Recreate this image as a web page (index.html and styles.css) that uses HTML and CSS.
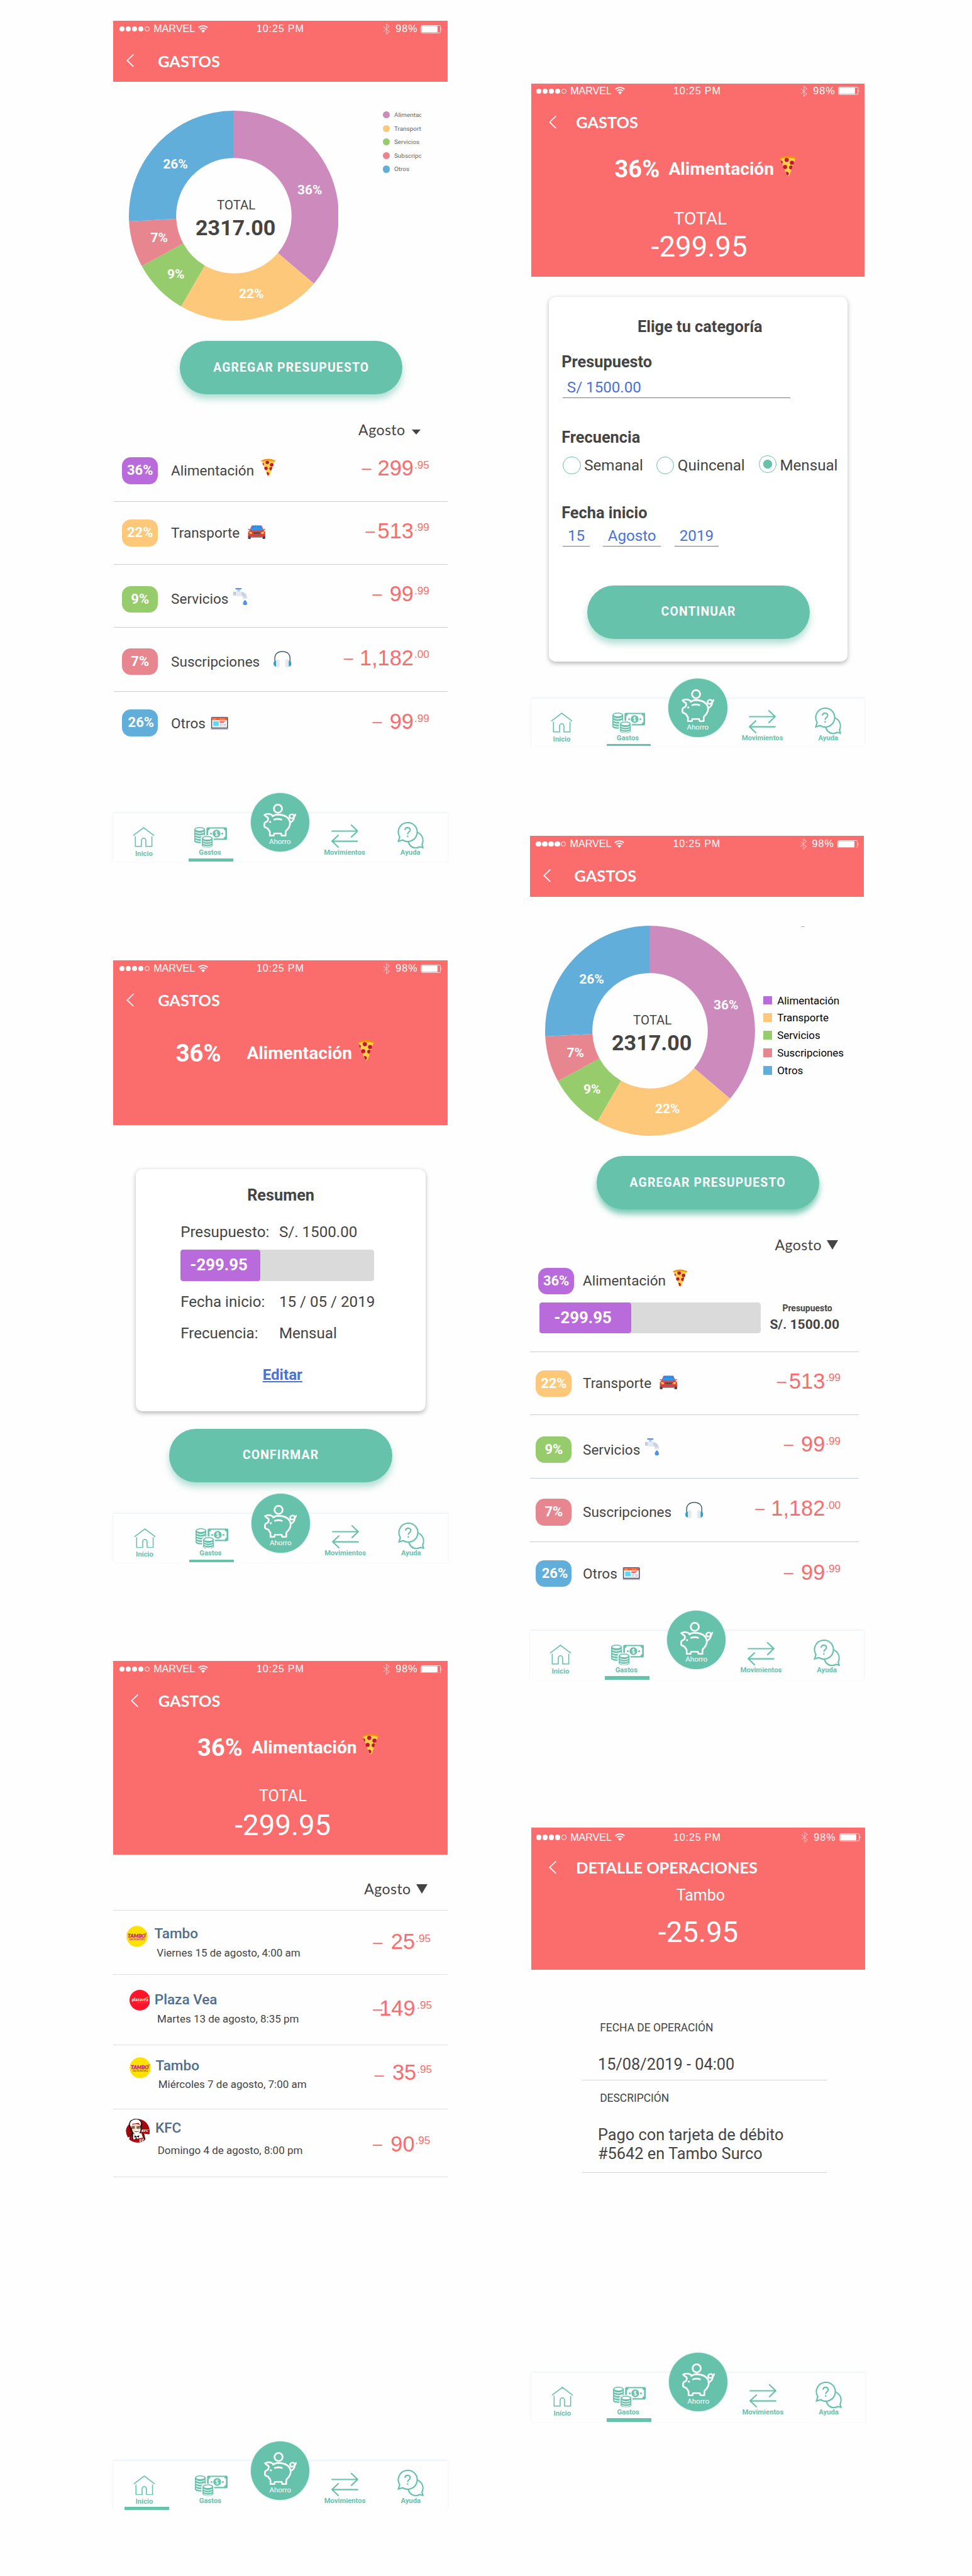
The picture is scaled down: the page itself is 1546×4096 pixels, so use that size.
FILE: index.html
```html
<!DOCTYPE html>
<html lang="es">
<head>
<meta charset="utf-8">
<title>Gastos</title>
<link rel="stylesheet" href="styles.css">
</head>
<body>

<svg class="sprite" aria-hidden="true">
  <symbol id="wifi" viewBox="0 0 30 23">
    <path d="M1.5 7.5a19.5 19.5 0 0 1 27 0M6 12.6a12.8 12.8 0 0 1 18 0" fill="none" stroke="#fff" stroke-width="3.2"/>
    <path d="M9.6 16.6a7.8 7.8 0 0 1 10.8 0L15 22.5z" fill="#fff"/>
  </symbol>
  <symbol id="bluetooth" viewBox="0 0 21 34">
    <path d="M1.5 9.5 19 24.5 10.5 32V2L19 9.5 1.5 24.5" fill="none" stroke="#fff" stroke-width="2.2"/>
  </symbol>
  <symbol id="battery" viewBox="0 0 64 24">
    <rect x="1" y="1" width="58" height="22" rx="3.5" fill="none" stroke="#fff" stroke-width="1.6"/>
    <rect x="2.6" y="2.8" width="47.5" height="18.4" rx="2" fill="#fff"/>
    <path d="M61 8q3 4 0 8z" fill="#fff"/>
  </symbol>
  <symbol id="chevron" viewBox="0 0 22 38">
    <path d="M20.5 1.5 2.5 19l18 17.500" fill="none" stroke="#fff" stroke-width="3.2" stroke-linecap="round"/>
  </symbol>

  <symbol id="pizza" viewBox="0 0 44 53">
    <path d="M3 7Q22 2 41 7L26 50q-3.500 4-7 0z" fill="#ffce4b"/>
    <g fill="#be1931">
      <circle cx="19" cy="11.500" r="5.200"/><circle cx="32" cy="18.500" r="5.200"/>
      <circle cx="15" cy="29" r="5"/><path d="M31 35a5 5 0 1 1 2.800-8z"/>
      <path d="M16.500 41.500a4.600 4.600 0 1 1 5 8.500q-2 0-2.500-1z"/><path d="M4.500 12.500q5 1 4.500 5.500-.5 2.500-2.500 2.500z"/>
    </g>
    <path d="M0 6.500Q21-4.500 44 6.500L42.500 9.500Q22 2.500 1.500 9.500z" fill="#f4900c"/>
  </symbol>

  <symbol id="car" viewBox="0 0 53 41">
    <path d="M12 1h29l6 13 5 7v13H1V21l5-7z" fill="#e8443f"/>
    <path d="M12.500 3q14-3 28 0l5 11q-19 4-38 0z" fill="#3396e8"/>
    <path d="M17 2l-2 6M23 1.500l-1 6M30 1.500l1 6M36 2l2 6" stroke="#1a6dbf" stroke-width="1.500"/>
    <path d="M0 11h6v3H2zM53 11h-6v3h4z" fill="#e8443f"/>
    <path d="M4 19l8 2 1 5-7-1zM49 19l-8 2-1 5 7-1z" fill="#ffd34d"/>
    <path d="M15 21h23l-3 5H18z" fill="#5a4a4c"/>
    <path d="M2 28h49v5H2z" fill="#d8403e"/>
    <path d="M1 33h8v7q-4 2-8 0zM44 33h8v7q-4 2-8 0z" fill="#4b4448"/>
    <path d="M9 33h35v4H9z" fill="#7b7478"/>
  </symbol>

  <symbol id="faucet" viewBox="0 0 42 52">
    <path d="M0 11h24v11H0z" fill="#c3cbdc"/>
    <path d="M22 11q17 0 19 17v3H29v-2q0-7-7-7z" fill="#ccd3e2"/>
    <path d="M8 9h16v15H8z" fill="#e4e9f3"/><path d="M12 4h7v6h-7z" fill="#b7c0d4"/>
    <rect x="6" y="0" width="19" height="4" rx="2" fill="#5294ea"/>
    <path d="M28 27h14v4H28z" fill="#dfe5f0"/>
    <path d="M35 35q6 6 6 10a6 6 0 0 1-12 0q0-4 6-10z" fill="#4c93ec"/>
  </symbol>

  <symbol id="headphones" viewBox="0 0 53 50">
    <path d="M4 30V22C4 8 14 1.500 26.500 1.500S49 8 49 22V30" fill="none" stroke="#34495e" stroke-width="2.400"/>
    <path d="M8 29H5q-5 2-5 8.500T5 46h3zM45 29h3q5 2 5 8.500T48 46h-3z" fill="#2ea2cc"/>
    <rect x="8" y="25" width="10" height="24" rx="4.500" fill="#e4e8ea"/>
    <rect x="35" y="25" width="10" height="24" rx="4.500" fill="#e4e8ea"/>
  </symbol>

  <symbol id="laptop" viewBox="0 0 53 38">
    <rect x="1.500" y="0" width="50" height="35" rx="3" fill="#5c546a"/>
    <path d="M4.500 3h44v28h-44z" fill="#fff"/><path d="M4.500 3h44v6h-44z" fill="#ff4f19"/>
    <path d="M8 5h7v1.800H8zM28 5h3v1.800h-3zM33 5h3v1.800h-3zM38 5h3v1.800h-3z" fill="#ffd08a"/>
    <path d="M8 13h16v14H8z" fill="#54dcff"/>
    <path d="M26.500 12h17v1.800h-17zM26.500 15.500h13v1.800h-13z" fill="#e0262e"/>
    <path d="M27 20h8v1.500h-8zM37 20h9v1.500h-9zM27 23h8v1.500h-8zM37 23h9v1.500h-9zM27 26h8v1.500h-8zM37 26h9v1.500h-9z" fill="#b9b5c6"/>
    <path d="M0 34.500h53q0 3.500-3 3.500H3q-3 0-3-3.500z" fill="#b9b3c4"/>
  </symbol>

  <symbol id="home" viewBox="0 0 65 59">
    <path d="M1.500 25.500 32.500 2l31 23.500M8 27v30.500h18V40a6.500 7 0 0 1 13 0v17.500h18V27" fill="none" stroke="#67c2ac" stroke-width="3"/>
  </symbol>

  <symbol id="cash" viewBox="0 0 97 61">
    <rect x="36" y="1" width="61" height="37" rx="3.500" fill="#67c2ac"/>
    <path d="M46 4.500h41q.5 5 5 5.500v18.500q-4.500.5-5 5.500H46q-.5-5-5-5.500V10q4.500-.5 5-5.500z" fill="#fff"/>
    <circle cx="66" cy="19.500" r="11.500" fill="#67c2ac"/>
    <path d="M69.500 15.800q-1-2.300-3.500-2.300-3.500 0-3.500 2.700 0 2.300 3.500 3.300 3.800 1 3.800 3.300 0 2.700-3.800 2.700-3 0-3.800-2.600M66 11v17" fill="none" stroke="#fff" stroke-width="2"/>
    <circle cx="49.500" cy="19.500" r="2.800" fill="#67c2ac"/><circle cx="83" cy="19.500" r="2.800" fill="#67c2ac"/>
    <path d="M0 7v35q3 6 16 6t16-6V7Q29 0 16 0T0 7z" fill="#67c2ac"/>
    <ellipse cx="16" cy="7" rx="12.500" ry="4" fill="#fff"/>
    <path d="M3 15q5 3.500 13 3.500T29 15M3 23q5 3.500 13 3.500T29 23M3 31q5 3.500 13 3.500T29 31M3 39q5 3.500 13 3.500T29 39" fill="none" stroke="#fff" stroke-width="2.600"/>
    <path d="M19.500 31q3-7 19-7t19 7V61h-38z" fill="#fff"/>
    <path d="M22.500 33v22q3 6 16 6t16-6V33q-3-6.500-16-6.500T22.500 33z" fill="#67c2ac"/>
    <ellipse cx="38.500" cy="33.500" rx="12.500" ry="4" fill="#fff"/>
    <path d="M25.500 41q5 3.500 13 3.500t13-3.500M25.500 48q5 3.500 13 3.500t13-3.500M25.500 55q5 3.500 13 3.500t13-3.500" fill="none" stroke="#fff" stroke-width="2.600"/>
  </symbol>

  <symbol id="pig" viewBox="0 0 97 97">
    <g fill="none" stroke="#fff" stroke-width="5" stroke-linejoin="round" stroke-linecap="round">
      <circle cx="43" cy="14.500" r="12"/>
      <path d="M27 34.500Q16 26.500 3 33q3 4 9 7 3 2.500 1.500 7l-2 5-6.500 3.500Q2.500 57 2.500 60v5q0 4 4 5.500l6 2.500 6.500 10v11.500h11.500L32 88h20l2 6.500h11.500l.5-13Q79 70 79 57 76 34 44 32q-10 0-17 5"/>
      <path d="M32 47q11-4 21 0"/>
      <path d="M78 56q12-4 13-17 0-7-6-8-7 .5-8 6 .5 6 6 6.500 9-1 12-12" stroke-width="4.600"/>
    </g>
    <circle cx="20" cy="54" r="3" fill="#fff"/>
  </symbol>

  <symbol id="transfer" viewBox="0 0 80 69">
    <path d="M2 19.500h75M59.500 2 78 19.500 59.500 37M78 49.500H3M20.500 32 2 49.500 20.500 67" fill="none" stroke="#67c2ac" stroke-width="4" stroke-linecap="round"/>
  </symbol>

  <symbol id="help" viewBox="0 0 78 79">
    <g fill="none" stroke="#67c2ac" stroke-width="4">
      <path d="M7 44.500A28 28 0 1 1 16 53.500L3 57z"/>
      <path d="M59 30q17 8 17 25 0 6-3 12l3 9-10-2.500Q60 77 54 77 36 76 32 57"/>
      <path d="M22.500 24q.5-7.500 8-7.500 7.500.5 7.500 7 0 4-4 6.500-3.500 2.500-3.500 6.500"/>
      <path d="M30.500 40v4.500"/>
    </g>
  </symbol>
</svg>

<main class="board">
  <div class="column">

    <!-- Gastos: lista por categoría -->
    <section class="phone phone-gastos">
      <header class="header">
        <div class="status">
          <div class="carrier"><i></i><i></i><i></i><i></i><i class="off"></i><span>MARVEL</span><svg class="wifi"><use href="#wifi"/></svg></div>
          <span class="time">10:25 PM</span>
          <div class="power"><svg class="bluetooth"><use href="#bluetooth"/></svg><span>98%</span><svg class="battery"><use href="#battery"/></svg></div>
        </div>
        <div class="titlebar"><svg class="chevron"><use href="#chevron"/></svg><h1>GASTOS</h1></div>
      </header>
      <div class="chart">
        <svg class="donut" viewBox="-311 -311 622 622">
          <path d="M0-311A311 311 0 0 1 237.200 201.100L130.400 110.600A171 171 0 0 0 0-171z" fill="#cc8abd"/>
          <path d="M237.200 201.100A311 311 0 0 1-156.400 268.800L-86 147.800A171 171 0 0 0 130.400 110.600z" fill="#fdc87a"/>
          <path d="M-156.400 268.800A311 311 0 0 1-272.800 149.300L-150 82.100A171 171 0 0 0-86 147.800z" fill="#96cc6b"/>
          <path d="M-272.800 149.300A311 311 0 0 1-310.500 16.800L-170.700 9.300A171 171 0 0 0-150 82.100z" fill="#e8868f"/>
          <path d="M-310.500 16.800A311 311 0 0 1 0-311V-171A171 171 0 0 0-170.700 9.300z" fill="#62aedb"/>
          <g class="slice-label">
            <text x="225" y="-64">36%</text><text x="52" y="244">22%</text><text x="-172" y="186">9%</text>
            <text x="-221" y="79">7%</text><text x="-173" y="-139">26%</text>
          </g>
          <text x="7" y="-19" class="donut-label">TOTAL</text>
          <text x="5" y="58" class="donut-total">2317.00</text>
        </svg>
        <ul class="legend dots">
          <li><i class="c-pink"></i><span>Alimentación</span></li>
          <li><i class="c-orange"></i><span>Transporte</span></li>
          <li><i class="c-green"></i><span>Servicios</span></li>
          <li><i class="c-red"></i><span>Subscripciones</span></li>
          <li><i class="c-blue"></i><span>Otros</span></li>
        </ul>
      </div>
      <button class="button add">AGREGAR PRESUPUESTO</button>
      <div class="month">Agosto<i class="caret small"></i></div>
      <ul class="expenses">
        <li class="r-food"><b class="badge c-purple">36%</b><span class="name">Alimentación</span><svg class="pizza"><use href="#pizza"/></svg><span class="amount"><span class="minus">–</span><span class="whole">299</span><span class="cents">.95</span></span></li>
        <li class="r-car"><b class="badge c-orange">22%</b><span class="name">Transporte</span><svg class="car"><use href="#car"/></svg><span class="amount"><span class="minus">–</span><span class="whole">513</span><span class="cents">.99</span></span></li>
        <li class="r-services"><b class="badge c-green">9%</b><span class="name">Servicios</span><svg class="faucet"><use href="#faucet"/></svg><span class="amount"><span class="minus">–</span><span class="whole">99</span><span class="cents">.99</span></span></li>
        <li class="r-subs"><b class="badge c-red">7%</b><span class="name">Suscripciones</span><svg class="headphones"><use href="#headphones"/></svg><span class="amount"><span class="minus">–</span><span class="whole">1,182</span><span class="cents">.00</span></span></li>
        <li class="r-other"><b class="badge c-blue">26%</b><span class="name">Otros</span><svg class="laptop"><use href="#laptop"/></svg><span class="amount"><span class="minus">–</span><span class="whole">99</span><span class="cents">.99</span></span></li>
      </ul>
      <nav class="tabs">
        <a class="tab t-home"><svg><use href="#home"/></svg><span>Inicio</span></a>
        <a class="tab t-cash active"><svg><use href="#cash"/></svg><span>Gastos</span></a>
        <a class="fab"><svg><use href="#pig"/></svg><span>Ahorro</span></a>
        <a class="tab t-move"><svg><use href="#transfer"/></svg><span>Movimientos</span></a>
        <a class="tab t-help"><svg><use href="#help"/></svg><span>Ayuda</span></a>
      </nav>
    </section>

    <!-- Resumen del presupuesto -->
    <section class="phone phone-resumen">
      <header class="header">
        <div class="status">
          <div class="carrier"><i></i><i></i><i></i><i></i><i class="off"></i><span>MARVEL</span><svg class="wifi"><use href="#wifi"/></svg></div>
          <span class="time">10:25 PM</span>
          <div class="power"><svg class="bluetooth"><use href="#bluetooth"/></svg><span>98%</span><svg class="battery"><use href="#battery"/></svg></div>
        </div>
        <div class="titlebar"><svg class="chevron"><use href="#chevron"/></svg><h1>GASTOS</h1></div>
        <div class="category"><b class="share">36%</b><b class="cat">Alimentación</b><svg><use href="#pizza"/></svg></div>
      </header>
      <div class="card summary">
        <h2>Resumen</h2>
        <p class="pair"><span>Presupuesto:</span><span>S/. 1500.00</span></p>
        <div class="meter"><b>-299.95</b></div>
        <p class="pair"><span>Fecha inicio:</span><span>15 / 05 / 2019</span></p>
        <p class="pair"><span>Frecuencia:</span><span>Mensual</span></p>
        <a class="edit">Editar</a>
      </div>
      <button class="button">CONFIRMAR</button>
      <nav class="tabs">
        <a class="tab t-home"><svg><use href="#home"/></svg><span>Inicio</span></a>
        <a class="tab t-cash active"><svg><use href="#cash"/></svg><span>Gastos</span></a>
        <a class="fab"><svg><use href="#pig"/></svg><span>Ahorro</span></a>
        <a class="tab t-move"><svg><use href="#transfer"/></svg><span>Movimientos</span></a>
        <a class="tab t-help"><svg><use href="#help"/></svg><span>Ayuda</span></a>
      </nav>
    </section>

    <!-- Movimientos de la categoría -->
    <section class="phone phone-movimientos">
      <header class="header">
        <div class="status">
          <div class="carrier"><i></i><i></i><i></i><i></i><i class="off"></i><span>MARVEL</span><svg class="wifi"><use href="#wifi"/></svg></div>
          <span class="time">10:25 PM</span>
          <div class="power"><svg class="bluetooth"><use href="#bluetooth"/></svg><span>98%</span><svg class="battery"><use href="#battery"/></svg></div>
        </div>
        <div class="titlebar"><svg class="chevron"><use href="#chevron"/></svg><h1>GASTOS</h1></div>
        <div class="category"><b class="share">36%</b><b class="cat">Alimentación</b><svg><use href="#pizza"/></svg></div>
        <p class="total-label">TOTAL</p>
        <p class="total">-299.95</p>
      </header>
      <div class="month">Agosto<i class="caret"></i></div>
      <ul class="moves">
        <li class="m1">
          <svg class="logo" viewBox="0 0 64 64"><circle cx="32" cy="32" r="31.500" fill="#ffe100"/><text x="31" y="36.500" class="tambo-name" textLength="54" lengthAdjust="spacingAndGlyphs">TAMBO</text><text x="32" y="44" class="tambo-claim" textLength="46" lengthAdjust="spacingAndGlyphs">CADA VEZ MÁS CERCA</text><circle cx="59" cy="23.500" r="2" fill="none" stroke="#be1c91"/></svg>
          <div class="where"><b>Tambo</b><span>Viernes 15 de agosto, 4:00 am</span></div><span class="amount"><span class="minus">–</span><span class="whole">25</span><span class="cents">.95</span></span>
        </li>
        <li class="m2">
          <svg class="logo" viewBox="0 0 62 62"><circle cx="31" cy="31" r="31" fill="#ff142b"/><text x="7" y="35" class="pv-name" textLength="49" lengthAdjust="spacingAndGlyphs">plaza<tspan fill="#ffe23b">v</tspan>ea</text><path d="M43 31q5-9 14-9" fill="none" stroke="#ffe23b" stroke-width="1.800"/><path d="M24 38.500h32" stroke="#ff8a95" stroke-width="1" stroke-dasharray="2 1"/></svg>
          <div class="where"><b>Plaza Vea</b><span>Martes 13 de agosto, 8:35 pm</span></div><span class="amount"><span class="minus">–</span><span class="whole">149</span><span class="cents">.95</span></span>
        </li>
        <li class="m3">
          <svg class="logo" viewBox="0 0 64 64"><circle cx="32" cy="32" r="31.500" fill="#ffe100"/><text x="31" y="36.500" class="tambo-name" textLength="54" lengthAdjust="spacingAndGlyphs">TAMBO</text><text x="32" y="44" class="tambo-claim" textLength="46" lengthAdjust="spacingAndGlyphs">CADA VEZ MÁS CERCA</text><circle cx="59" cy="23.500" r="2" fill="none" stroke="#be1c91"/></svg>
          <div class="where"><b>Tambo</b><span>Miércoles 7 de agosto, 7:00 am</span></div><span class="amount"><span class="minus">–</span><span class="whole">35</span><span class="cents">.95</span></span>
        </li>
        <li class="m4">
          <svg class="logo" viewBox="0 0 71 71">
            <path d="M12 15Q20 1 36 .5 58 2 67 20q6 14 3 26l-16-2 4 18Q48 70 36 70.500 22 71 10 61l2-8-6 2Q0 44 .5 34 2 22 12 15z" fill="#a3080c"/>
            <path d="M13 57l9-13 24-2 7 22Q44 70 34 70 20 68 13 57z" fill="#b30d12"/>
            <path d="M20 57l2-13 24-2 5 14-30 5z" fill="#fff"/>
            <path d="M41 60h3v9h-3zM47 59h3v8h-3zM52 58h2v6h-2z" fill="#fff"/>
            <path d="M12 54l8-13 1 22M53 44l4 18M18 40l-3-8-5-15 4-10L26 .8 40 3l6 10-1 22-2 8" fill="none" stroke="#111" stroke-width="2.600"/>
            <path d="M12 17Q16 3 28 2q14-1 17 11l-1 8-6-9-18 3-2 14z" fill="#fff"/>
            <path d="M17 20q9-8 25-2l2 14q-1 11-11 16-12-4-14-16z" fill="#fbdcbf"/>
            <path d="M23 34q9-5 17 0l-2 7-6 9-6-8z" fill="#fff"/>
            <path d="M17 23h10M32 23h12M18 26h8v2h-8zM33 26h8v2h-8zM26 37q6 3 12 0M15 28l4 11 7 7" fill="none" stroke="#111" stroke-width="1.600"/>
            <path d="M26 49l6 3 8-3-1 7-6-3-7 3zM31 53l-3 8h5z" fill="#111"/>
            <text x="46" y="38.500" class="kfc-name" textLength="22" lengthAdjust="spacingAndGlyphs">KFC</text>
          </svg>
          <div class="where"><b>KFC</b><span>Domingo 4 de agosto, 8:00 pm</span></div><span class="amount"><span class="minus">–</span><span class="whole">90</span><span class="cents">.95</span></span>
        </li>
      </ul>
      <nav class="tabs">
        <a class="tab t-home active"><svg><use href="#home"/></svg><span>Inicio</span></a>
        <a class="tab t-cash"><svg><use href="#cash"/></svg><span>Gastos</span></a>
        <a class="fab"><svg><use href="#pig"/></svg><span>Ahorro</span></a>
        <a class="tab t-move"><svg><use href="#transfer"/></svg><span>Movimientos</span></a>
        <a class="tab t-help"><svg><use href="#help"/></svg><span>Ayuda</span></a>
      </nav>
    </section>
  </div>

  <div class="column">

    <!-- Formulario de presupuesto -->
    <section class="phone phone-form">
      <header class="header">
        <div class="status">
          <div class="carrier"><i></i><i></i><i></i><i></i><i class="off"></i><span>MARVEL</span><svg class="wifi"><use href="#wifi"/></svg></div>
          <span class="time">10:25 PM</span>
          <div class="power"><svg class="bluetooth"><use href="#bluetooth"/></svg><span>98%</span><svg class="battery"><use href="#battery"/></svg></div>
        </div>
        <div class="titlebar"><svg class="chevron"><use href="#chevron"/></svg><h1>GASTOS</h1></div>
        <div class="category"><b class="share">36%</b><b class="cat">Alimentación</b><svg><use href="#pizza"/></svg></div>
        <p class="total-label">TOTAL</p>
        <p class="total">-299.95</p>
      </header>
      <div class="card form">
        <h2>Elige tu categoría</h2>
        <h3 class="h-budget">Presupuesto</h3>
        <div class="field">S/ 1500.00</div>
        <h3 class="h-freq">Frecuencia</h3>
        <div class="radios">
          <label><i></i><span>Semanal</span></label>
          <label><i></i><span>Quincenal</span></label>
          <label class="checked"><i></i><span>Mensual</span></label>
        </div>
        <h3 class="h-date">Fecha inicio</h3>
        <div class="date"><span class="day">15</span><span class="mon">Agosto</span><span class="year">2019</span></div>
        <button class="button">CONTINUAR</button>
      </div>
      <nav class="tabs">
        <a class="tab t-home"><svg><use href="#home"/></svg><span>Inicio</span></a>
        <a class="tab t-cash active"><svg><use href="#cash"/></svg><span>Gastos</span></a>
        <a class="fab"><svg><use href="#pig"/></svg><span>Ahorro</span></a>
        <a class="tab t-move"><svg><use href="#transfer"/></svg><span>Movimientos</span></a>
        <a class="tab t-help"><svg><use href="#help"/></svg><span>Ayuda</span></a>
      </nav>
    </section>

    <!-- Gastos con presupuesto activo -->
    <section class="phone phone-presupuesto">
      <header class="header">
        <div class="status">
          <div class="carrier"><i></i><i></i><i></i><i></i><i class="off"></i><span>MARVEL</span><svg class="wifi"><use href="#wifi"/></svg></div>
          <span class="time">10:25 PM</span>
          <div class="power"><svg class="bluetooth"><use href="#bluetooth"/></svg><span>98%</span><svg class="battery"><use href="#battery"/></svg></div>
        </div>
        <div class="titlebar"><svg class="chevron"><use href="#chevron"/></svg><h1>GASTOS</h1></div>
      </header>
      <div class="chart">
        <svg class="donut" viewBox="-311 -311 622 622">
          <path d="M0-311A311 311 0 0 1 237.200 201.100L130.400 110.600A171 171 0 0 0 0-171z" fill="#cc8abd"/>
          <path d="M237.200 201.100A311 311 0 0 1-156.400 268.800L-86 147.800A171 171 0 0 0 130.400 110.600z" fill="#fdc87a"/>
          <path d="M-156.400 268.800A311 311 0 0 1-272.800 149.300L-150 82.100A171 171 0 0 0-86 147.800z" fill="#96cc6b"/>
          <path d="M-272.800 149.300A311 311 0 0 1-310.500 16.800L-170.700 9.300A171 171 0 0 0-150 82.100z" fill="#e8868f"/>
          <path d="M-310.500 16.800A311 311 0 0 1 0-311V-171A171 171 0 0 0-170.700 9.300z" fill="#62aedb"/>
          <g class="slice-label">
            <text x="225" y="-64">36%</text><text x="52" y="244">22%</text><text x="-172" y="186">9%</text>
            <text x="-221" y="79">7%</text><text x="-173" y="-139">26%</text>
          </g>
          <text x="7" y="-19" class="donut-label">TOTAL</text>
          <text x="5" y="58" class="donut-total">2317.00</text>
        </svg>
        <ul class="legend squares">
          <li><i class="c-purple"></i><span>Alimentación</span></li>
          <li><i class="c-orange"></i><span>Transporte</span></li>
          <li><i class="c-green"></i><span>Servicios</span></li>
          <li><i class="c-red"></i><span>Suscripciones</span></li>
          <li><i class="c-blue"></i><span>Otros</span></li>
        </ul>
      </div>
      <button class="button add">AGREGAR PRESUPUESTO</button>
      <div class="month">Agosto<i class="caret"></i></div>
      <div class="budget">
        <div class="budget-head"><b class="badge c-purple">36%</b><span class="name">Alimentación</span><svg class="pizza"><use href="#pizza"/></svg></div>
        <div class="budget-body">
          <div class="meter"><b>-299.95</b></div>
          <div class="limit"><small>Presupuesto</small><b>S/. 1500.00</b></div>
        </div>
      </div>
      <ul class="expenses">
        <li class="r-car"><b class="badge c-orange">22%</b><span class="name">Transporte</span><svg class="car"><use href="#car"/></svg><span class="amount"><span class="minus">–</span><span class="whole">513</span><span class="cents">.99</span></span></li>
        <li class="r-services"><b class="badge c-green">9%</b><span class="name">Servicios</span><svg class="faucet"><use href="#faucet"/></svg><span class="amount"><span class="minus">–</span><span class="whole">99</span><span class="cents">.99</span></span></li>
        <li class="r-subs"><b class="badge c-red">7%</b><span class="name">Suscripciones</span><svg class="headphones"><use href="#headphones"/></svg><span class="amount"><span class="minus">–</span><span class="whole">1,182</span><span class="cents">.00</span></span></li>
        <li class="r-other"><b class="badge c-blue">26%</b><span class="name">Otros</span><svg class="laptop"><use href="#laptop"/></svg><span class="amount"><span class="minus">–</span><span class="whole">99</span><span class="cents">.99</span></span></li>
      </ul>
      <nav class="tabs">
        <a class="tab t-home"><svg><use href="#home"/></svg><span>Inicio</span></a>
        <a class="tab t-cash active"><svg><use href="#cash"/></svg><span>Gastos</span></a>
        <a class="fab"><svg><use href="#pig"/></svg><span>Ahorro</span></a>
        <a class="tab t-move"><svg><use href="#transfer"/></svg><span>Movimientos</span></a>
        <a class="tab t-help"><svg><use href="#help"/></svg><span>Ayuda</span></a>
      </nav>
    </section>

    <!-- Detalle de una operación -->
    <section class="phone phone-detalle">
      <header class="header">
        <div class="status">
          <div class="carrier"><i></i><i></i><i></i><i></i><i class="off"></i><span>MARVEL</span><svg class="wifi"><use href="#wifi"/></svg></div>
          <span class="time">10:25 PM</span>
          <div class="power"><svg class="bluetooth"><use href="#bluetooth"/></svg><span>98%</span><svg class="battery"><use href="#battery"/></svg></div>
        </div>
        <div class="titlebar"><svg class="chevron"><use href="#chevron"/></svg><h1>DETALLE OPERACIONES</h1></div>
        <p class="total-label">Tambo</p>
        <p class="total">-25.95</p>
      </header>
      <dl class="detail">
        <dt>FECHA DE OPERACIÓN</dt>
        <dd class="when">15/08/2019 - 04:00</dd>
        <dt class="second">DESCRIPCIÓN</dt>
        <dd class="what">Pago con tarjeta de débito<br>#5642 en Tambo Surco</dd>
      </dl>
      <nav class="tabs">
        <a class="tab t-home"><svg><use href="#home"/></svg><span>Inicio</span></a>
        <a class="tab t-cash active"><svg><use href="#cash"/></svg><span>Gastos</span></a>
        <a class="fab"><svg><use href="#pig"/></svg><span>Ahorro</span></a>
        <a class="tab t-move"><svg><use href="#transfer"/></svg><span>Movimientos</span></a>
        <a class="tab t-help"><svg><use href="#help"/></svg><span>Ayuda</span></a>
      </nav>
    </section>
  </div>
</main>
</body>
</html>
```
FILE: styles.css
```css
/* 1rem is 1/28.8 of the board width, so every length scales with the board */
html { font-size: 53.6806px; }
* { box-sizing: border-box; margin: 0; padding: 0; }
body { width: 28.8rem; height: 76.3rem; background: #fefefe; color: #444; font-family: Roboto, sans-serif; overflow-x: hidden; }
ul { list-style: none; }
svg { display: block; flex: none; }
button { border: 0; font-family: inherit; display: block; }
.sprite { position: absolute; width: 0; height: 0; }

.board { display: flex; padding-left: 3.36rem; gap: 2.48rem; }
.column { width: 9.9rem; flex: none; }
.phone { display: flex; flex-direction: column; width: 9.9rem; white-space: nowrap; }
.phone-gastos { margin-top: .62rem; height: 24.9rem; }
.phone-resumen { margin-top: 2.92rem; height: 17.83rem; }
.phone-movimientos { margin-top: 2.93rem; height: 25.15rem; }
.phone-form { margin-top: 2.48rem; height: 19.62rem; width: 9.88rem; }
.phone-presupuesto { margin-top: 2.66rem; margin-left: -.04rem; height: 25rem; }
.phone-detalle { margin-top: 4.38rem; height: 17.6rem; }

.c-purple { background: #ba6bdb; }
.c-pink { background: #cc8abd; }
.c-orange { background: #fdc87a; }
.c-green { background: #96cc6b; }
.c-red { background: #e8868f; }
.c-blue { background: #62aedb; }

/* header */
.header { background: #fb6c6c; color: #fff; height: 1.8rem; flex: none; }
.phone-resumen .header { height: 4.88rem; }
.phone-movimientos .header { height: 5.74rem; }
.phone-form .header { height: 5.71rem; }
.phone-detalle .header { height: 4.21rem; }

.status { display: flex; align-items: center; height: .48rem; font: .3rem/.4rem "Liberation Sans", sans-serif; padding: 0 .15rem 0 .18rem; }
.carrier { display: flex; align-items: center; width: 4.06rem; }
.carrier i { width: .155rem; height: .155rem; border-radius: 50%; background: #fff; margin-right: .03rem; }
.carrier .off { background: none; border: 1px solid #fff; }
.carrier span { margin-left: .085rem; }
.wifi { width: .3rem; height: .23rem; margin-left: .09rem; }
.time { letter-spacing: .016rem; }
.power { display: flex; align-items: center; margin-left: auto; }
.power span { margin: 0 .09rem 0 .16rem; letter-spacing: .02rem; }
.bluetooth { width: .21rem; height: .34rem; opacity: .5; }
.battery { width: .64rem; height: .24rem; }
.phone-form .status, .phone-detalle .status { padding-left: .15rem; padding-right: .14rem; }
.phone-form .status { height: .43rem; }
.phone-resumen .status { height: .5rem; }
.phone-detalle .status { height: .57rem; }

.titlebar { display: flex; align-items: center; height: .6rem; margin-top: .4rem; padding-left: .39rem; }
.chevron { width: .22rem; height: .38rem; }
.titlebar h1 { font: bold .472rem/.6rem Lato, sans-serif; margin-left: .71rem; }
.phone-form .titlebar, .phone-movimientos .titlebar, .phone-detalle .titlebar { padding-left: .52rem; }
.phone-form h1, .phone-movimientos h1, .phone-detalle h1 { margin-left: .59rem; }
.phone-form .titlebar { margin-top: .41rem; }
.phone-resumen .titlebar { margin-top: .38rem; }
.phone-detalle .titlebar { margin-top: .31rem; }

.category { display: flex; align-items: center; height: .8rem; line-height: .8rem; padding-left: 2.47rem; margin-top: .7rem; }
.category svg { width: .53rem; height: .63rem; margin: 0 0 .22rem .14rem; }
.share { font-size: .71rem; width: 1.6rem; }
.cat { font-size: .525rem; }
.phone-movimientos .category { margin-top: .69rem; padding-left: 2.49rem; }
.phone-resumen .category { margin-top: .9rem; padding-left: 1.85rem; }
.phone-resumen .share { width: 2.1rem; }
.total-label { font-size: .525rem; line-height: .6rem; text-align: center; margin-top: .76rem; padding-left: .14rem; }
.total { font-size: .85rem; line-height: 1rem; text-align: center; margin-top: .04rem; padding-left: .08rem; }
.phone-movimientos .total-label { font-size: .47rem; margin-top: .73rem; }
.phone-movimientos .total { margin-top: .07rem; padding-left: .14rem; }
.phone-detalle .total-label { font-size: .465rem; margin-top: .23rem; }
.phone-detalle .total { margin-top: .29rem; padding: 0; }

/* chart */
.chart { display: flex; height: 7.68rem; flex: none; padding-left: .45rem; }
.donut { width: 6.22rem; height: 6.22rem; margin-top: .86rem; }
.slice-label { font: bold 39px Roboto, sans-serif; fill: #fff; text-anchor: middle; }
.donut-label { font: 38px Roboto, sans-serif; fill: #444; text-anchor: middle; }
.donut-total { font: bold 63.5px Roboto, sans-serif; fill: #444; text-anchor: middle; }
.legend li { display: flex; align-items: center; }
.legend i { flex: none; }
.dots { margin: .78rem 0 0 1.31rem; }
.dots li { height: .402rem; font-size: .185rem; color: #666; }
.dots i { width: .21rem; height: .21rem; border-radius: 50%; margin-right: .13rem; }
.dots span { width: .81rem; overflow: hidden; }
.squares { margin: 2.81rem 0 0 .24rem; position: relative; }
.squares li { height: .52rem; font-size: .315rem; color: #000; }
.squares i { width: .26rem; height: .26rem; margin-right: .16rem; }
.squares::before { content: ""; position: absolute; left: 1.13rem; top: -1.93rem; width: .1rem; height: .02rem; background: #cc8abd; border-radius: 50% 50% 0 0; }

.button { width: 6.6rem; height: 1.58rem; flex: none; border-radius: .79rem; background: #67c2ac; color: #fff; font-weight: bold; font-size: .36rem; letter-spacing: .022rem; padding-bottom: .04rem; margin-left: 1.66rem; box-shadow: 0 .14rem .2rem rgba(103, 194, 172, .5); }
.add { margin-left: 1.97rem; padding-bottom: 0; }
.phone-presupuesto .button { box-shadow: 0 .14rem .18rem rgba(103, 194, 172, .85); }

.month { display: flex; align-items: center; flex: none; height: .6rem; margin-top: .75rem; padding-left: 7.26rem; font: .43rem/.6rem Lato, sans-serif; letter-spacing: .008rem; }
.caret { border: .17rem solid transparent; border-top: .29rem solid #444; border-bottom: 0; margin-left: .15rem; }
.caret.small { border-width: .16rem .135rem 0; margin-left: .2rem; margin-top: .12rem; }
.phone-movimientos .month { height: .94rem; margin-top: .72rem; padding: 0 0 .34rem 7.43rem; border-bottom: .02rem solid #dedede; }

/* expense rows */
.expenses li { display: flex; align-items: center; border-bottom: .018rem solid #c9cdd4; margin-left: .02rem; }
.expenses li > * { flex: none; }
.badge { width: 1.06rem; height: .79rem; line-height: .79rem; border-radius: .26rem; margin-left: .24rem; color: #fff; font-size: .41rem; text-align: center; }
.name { font-size: .42rem; line-height: .5rem; margin-left: .39rem; padding-top: .03rem; }
.pizza { width: .44rem; height: .53rem; margin: 0 0 .2rem .2rem; }
.car { width: .53rem; height: .41rem; margin: 0 0 .07rem .23rem; }
.faucet { width: .42rem; height: .52rem; margin: 0 0 .17rem .15rem; }
.headphones { width: .53rem; height: .5rem; margin: 0 0 .13rem .41rem; }
.laptop { width: .53rem; height: .38rem; margin: .03rem 0 0 .16rem; }
.amount { display: flex; align-items: center; margin: 0 .54rem .13rem auto; height: .7rem; color: #fb6c6c; font-family: "Liberation Sans", sans-serif; }
.minus { font-size: .5rem; margin-right: .19rem; }
.whole { font-size: .64rem; }
.cents { font-size: .32rem; margin: 0 0 .2rem .02rem; }
.expenses .r-food { height: 1.83rem; padding-top: .01rem; }
.expenses .r-car { height: 1.87rem; padding-top: .01rem; }
.expenses .r-services { height: 1.87rem; padding-top: .2rem; }
.expenses .r-subs { height: 1.885rem; padding-top: .14rem; }
.expenses .r-other { height: 1.86rem; border: 0; }
.r-car .minus { margin-right: .08rem; }
.r-services .amount { margin-bottom: .31rem; }
.r-services .minus, .r-other .minus { margin-right: .23rem; }
.r-subs .amount { margin-bottom: .22rem; }
.r-other .amount { margin-bottom: .06rem; }
.r-other .name { padding-top: .08rem; }
.r-other .badge { padding-left: .06rem; }

.phone-presupuesto .expenses .badge { margin-left: .18rem; }
.phone-presupuesto .expenses .name { margin-left: .33rem; }
.phone-presupuesto .expenses li { width: 9.75rem; margin-left: 0; }
.budget { width: 9.75rem; height: 2.88rem; padding-top: .385rem; border-bottom: .018rem solid #c9cdd4; }
.budget-head { display: flex; align-items: center; height: .79rem; }
.budget-head .badge { margin-left: .25rem; }
.budget-head .name { margin-left: .26rem; padding: 0; }
.budget-body { display: flex; margin: .23rem 0 0 .28rem; }
.meter { width: 6.56rem; height: .92rem; border-radius: .08rem; background: #dadada; flex: none; }
.meter b { display: block; width: 2.72rem; height: .92rem; line-height: .92rem; border-radius: .08rem; background: #ba6bdb; color: #fff; font-size: .48rem; text-align: center; padding-right: .14rem; }
.limit { margin-left: .27rem; width: 2.06rem; display: flex; flex-direction: column; align-items: center; }
.limit small { display: block; font-weight: bold; font-size: .26rem; line-height: .36rem; padding-left: .16rem; }
.limit b { display: block; font-size: .392rem; line-height: .58rem; }

/* cards */
.card { flex: none; border-radius: .2rem; background: #fff; box-shadow: 0 .04rem .14rem rgba(0, 0, 0, .28); }
.card h2 { font-size: .472rem; line-height: .6rem; text-align: center; }
.summary { width: 8.58rem; height: 7.17rem; margin: 1.32rem 0 .51rem .67rem; padding: .47rem 1.32rem 0; }
.pair { display: flex; height: .6rem; line-height: .6rem; font-size: .45rem; }
.pair span:first-child { width: 2.92rem; }
.summary h2 + .pair { margin-top: .49rem; }
.summary .meter { width: 5.74rem; margin: .22rem 0 .32rem; }
.summary .meter b { width: 2.37rem; padding-right: .1rem; }
.pair + .pair { margin-top: .34rem; }
.edit { display: block; margin-top: .62rem; padding-left: .1rem; text-align: center; font-size: .45rem; line-height: .6rem; font-weight: bold; color: #4a72d8; text-decoration: underline; }

.form { width: 8.84rem; height: 10.8rem; margin: .61rem 0 0 .53rem; padding: .58rem 0 0 .41rem; }
.form h2 { padding-right: .31rem; }
.form h3 { font-size: .472rem; line-height: .6rem; margin-left: -.04rem; }
.h-budget { margin-top: .45rem; }
.field, .date span { height: .62rem; line-height: .62rem; font-size: .45rem; color: #4a72d8; border-bottom: .02rem solid #777; }
.field { width: 6.73rem; margin-top: .15rem; padding-left: .12rem; }
.h-freq { margin-top: .87rem; }
.radios { display: flex; height: .8rem; margin-top: .12rem; font-size: .45rem; }
.radios label { display: flex; align-items: center; gap: .1rem; width: 2.77rem; flex: none; }
.radios label + label { width: 3.03rem; }
.radios .checked.checked { width: auto; }
.radios i { display: block; width: .53rem; height: .53rem; flex: none; border: .035rem solid #67c2ac; border-radius: 50%; }
.radios .checked i { background: radial-gradient(circle, #67c2ac 0 .125rem, transparent .14rem); margin-bottom: .08rem; }
.h-date { margin-top: .72rem; }
.date { display: flex; gap: .395rem; margin-top: .06rem; }
.date span { text-align: center; }
.date .day { width: .79rem; }
.date .mon { width: 1.72rem; }
.date .year { width: 1.32rem; }
.form .button { margin: 1.16rem 0 0 .72rem; }

/* movements */
.moves li { display: flex; border-bottom: .018rem solid #dedede; }
.moves li > * { flex: none; }
.moves .logo { width: .63rem; height: .63rem; margin: .35rem 0 0 .47rem; }
.tambo-name { font: italic 900 15px Lato, sans-serif; fill: #be1c91; stroke: #be1c91; stroke-width: .6px; text-anchor: middle; }
.tambo-claim { font: bold 5px Roboto, sans-serif; fill: #be1c91; text-anchor: middle; }
.pv-name { font: bold 13px Lato, sans-serif; fill: #fff; }
.kfc-name { font: italic bold 9px "Open Sans", sans-serif; fill: #fff; }
.where { margin-left: .13rem; }
.where b { display: block; font-weight: 500; font-size: .42rem; line-height: .5rem; color: #4f6d90; }
.where span { display: block; font-size: .317rem; line-height: .4rem; margin-left: .08rem; }
.moves .amount { margin-bottom: 0; }
.moves .minus { margin-right: .25rem; padding-top: .03rem; }
.m1 { height: 1.9rem; }
.m1 .logo { margin: .44rem 0 0 .385rem; }
.m1 .where { margin: .44rem 0 0 .2rem; }
.m1 .where span { margin-top: .115rem; margin-left: .07rem; }
.m1 .amount { margin-top: .57rem; margin-right: .5rem; }
.m2 { height: 2.09rem; }
.moves .m2 .logo { width: .61rem; height: .61rem; margin-top: .45rem; }
.m2 .where { margin: .49rem 0 0 .14rem; }
.m2 .where span { margin-top: .12rem; }
.m2 .amount { margin-top: .65rem; margin-right: .46rem; }
.moves .m2 .minus { margin-right: -.09rem; }
.m2 .cents { margin-left: .05rem; }
.m3 { height: 1.9rem; }
.m3 .where { margin-top: .37rem; margin-left: .15rem; }
.m3 .where span { margin-top: .085rem; }
.m3 .amount { margin-top: .46rem; margin-right: .46rem; }
.moves .m3 .minus { padding-top: .12rem; }
.m4 { height: 2.01rem; }
.moves .m4 .logo { width: .71rem; height: .71rem; margin: .28rem 0 0 .36rem; }
.m4 .where { margin: .31rem 0 0 .17rem; }
.m4 .where span { margin-top: .215rem; margin-left: .07rem; }
.m4 .amount { margin-top: .67rem; margin-right: .51rem; }

/* operation detail */
.detail { margin: 1.53rem 0 0 1.515rem; width: 7.25rem; }
.detail dt { font-size: .325rem; line-height: .4rem; padding-left: .52rem; }
.detail dd { font-size: .472rem; padding-left: .46rem; border-bottom: .018rem solid #d4d4d4; }
.when { line-height: .6rem; margin-top: .59rem; padding-bottom: .14rem; }
.detail .second { margin-top: .34rem; }
.what { line-height: .56rem; margin-top: .59rem; padding-bottom: .27rem; }

/* bottom navigation */
.tabs { display: flex; flex: none; height: 1.44rem; margin-top: auto; background: #fefefe; box-shadow: 0 -.02rem .06rem rgba(120, 140, 170, .16); color: #67c2ac; }
.tab { position: relative; display: flex; flex-direction: column; align-items: center; font-weight: bold; font-size: .21rem; line-height: .24rem; }
.t-home { width: 1.81rem; padding-top: .42rem; }
.t-home svg { width: .65rem; height: .59rem; margin-bottom: .09rem; }
.t-cash { width: 2.16rem; padding-top: .42rem; }
.t-cash svg { width: .97rem; height: .61rem; margin-bottom: .04rem; }
.t-cash span { margin-right: .06rem; }
.t-move { width: 1.9rem; padding-top: .34rem; }
.t-move svg { width: .8rem; height: .69rem; margin-bottom: .04rem; }
.t-help { width: 2rem; padding-top: .26rem; }
.t-help svg { width: .78rem; height: .79rem; margin-bottom: .02rem; }
.active::after { content: ""; position: absolute; top: 1.35rem; bottom: 0; left: 50%; width: 1.32rem; margin-left: -.66rem; background: #67c2ac; }
.t-home.active::after { margin-left: -.59rem; }
.fab { display: flex; flex-direction: column; align-items: center; width: 1.74rem; height: 1.74rem; margin: -.59rem .095rem 0; padding-top: .325rem; border-radius: 50%; background: #67c2ac; box-shadow: 0 0 .04rem #8fd6c4; color: #fff; font-size: .215rem; line-height: .24rem; }
.fab svg { width: .97rem; height: .97rem; margin-bottom: .035rem; }
.phone-form .tabs { height: 1.41rem; }
.phone-resumen .tabs { height: 1.43rem; padding-left: .02rem; }
.phone-presupuesto .tabs, .phone-detalle .tabs { height: 1.46rem; }
.phone-movimientos .tabs { height: 1.45rem; padding-left: .01rem; }
.phone-detalle .tabs { padding-left: .015rem; }
```
